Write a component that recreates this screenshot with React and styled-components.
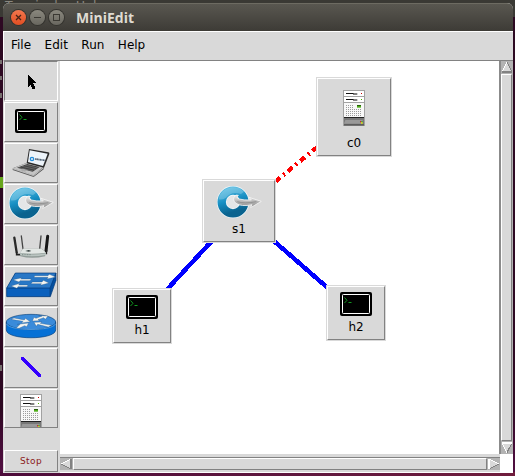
import React from "react";
import styled, { createGlobalStyle, css } from "styled-components";

const GlobalStyle = createGlobalStyle`
  * { box-sizing: border-box; }
  body { margin: 0; overflow: hidden; font-family: "DejaVu Sans", sans-serif; font-size: 12px; color: #000; }
  svg { display: block; flex: none; }
`;

const raised = css`
  border: 1px solid;
  border-color: #fff #828282 #828282 #fff;
`;

const Desktop = styled.div`
  position: relative;
  width: 515px;
  height: 476px;
  padding: 3px 2px 3px 3px;
  overflow: hidden;
  background:
    linear-gradient(#3a3934, #3a3934) 0 0 / 100% 17px no-repeat,
    linear-gradient(90deg, #4d0b3a, #61183f 60%, #701d3d) 0 100% / 100% 4px no-repeat,
    linear-gradient(#2d0922 0 410px, #3c0a2f 430px, #541044);
`;

const TerminalMenu = styled.div`
  position: absolute;
  top: 0;
  left: 5px;
  display: flex;
  gap: 18px;
  font-size: 12.5px;
  line-height: 11px;
  color: #8a8880;
`;

const Speck = styled.div`
  position: absolute;
  left: 0;
  top: ${(p) => p.$top}px;
  width: ${(p) => p.$width || 2}px;
  height: ${(p) => p.$height}px;
  background: ${(p) => p.$color};
`;

const Window = styled.div`
  position: relative;
  width: 510px;
  height: 470px;
  display: flex;
  flex-direction: column;
  border-radius: 6px 6px 0 0;
  overflow: hidden;
  background: #d9d9d9;
`;

const TitleBar = styled.header`
  flex: none;
  height: 28px;
  display: flex;
  align-items: center;
  gap: 4px;
  padding: 0 8px;
  background: linear-gradient(#595750, #3d3b36);
  border-top: 1px solid #6d6b62;
`;

const WindowButton = styled.span`
  width: 15px;
  height: 15px;
  border-radius: 50%;
  box-shadow: 0 0 0 1px #35342f;
  background: ${(p) => (p.$close ? "linear-gradient(#f4774e, #e14e22)" : "linear-gradient(#8a887e, #69675f)")};
`;

const Title = styled.h1`
  margin: 0 0 0 8px;
  font: bold 14px/18px "Open Sans", sans-serif;
  color: #dfdbd2;
`;

const MenuBar = styled.nav`
  flex: none;
  height: 30px;
  display: flex;
  align-items: center;
  gap: 13.5px;
  padding: 0 0 2px 7px;
  border-top: 1px solid #fff;
  border-bottom: 1px solid #828282;
  border-left: 1px solid #fff;
`;

const Body = styled.div`
  flex: 1;
  display: flex;
  min-height: 0;
`;

const Toolbar = styled.aside`
  width: 57px;
  display: flex;
  flex-direction: column;
  gap: 1px;
  padding-left: 1px;
`;

const ToolButton = styled.div`
  width: 54px;
  height: ${(p) => (p.$clipped ? 39 : 40)}px;
  flex: none;
  display: flex;
  justify-content: center;
  align-items: ${(p) => (p.$clipped ? "flex-start" : "center")};
  padding-top: ${(p) => (p.$clipped ? 4 : 0)}px;
  padding-bottom: ${(p) => p.$lift || 0}px;
  overflow: hidden;
  ${raised}
  ${(p) => p.$active && css`border-color: #828282 #fff #fff #828282;`}
`;

const StopButton = styled.div`
  width: 54px;
  height: 22px;
  margin: auto 0 1px;
  display: flex;
  align-items: center;
  justify-content: center;
  font-size: 9px;
  letter-spacing: 0.4px;
  color: #8b1a1a;
  ${raised}
`;

const Workspace = styled.main`
  flex: 1;
  display: grid;
  grid-template: 393px 19px / 439px 14px;
  background: #fff;
`;

const Canvas = styled.section`
  position: relative;
  overflow: hidden;
  background: #fff;
`;

const Links = styled.svg`
  position: absolute;
  inset: 0;
`;

const NodeBox = styled.div`
  position: absolute;
  left: ${(p) => p.$x}px;
  top: ${(p) => p.$y}px;
  width: ${(p) => p.$w}px;
  height: ${(p) => p.$h}px;
  padding: 1px;
  background: #d9d9d9;
`;

const NodeFace = styled.div`
  height: 100%;
  display: flex;
  flex-direction: column;
  align-items: center;
  padding-top: ${(p) => p.$pad}px;
  gap: ${(p) => p.$gap}px;
  line-height: 14px;
  ${raised}
`;

const ScrollV = styled.div`
  display: flex;
  flex-direction: column;
  width: 14px;
  padding: 0 1px 0 0;
  border-left: 2px solid #8b8b8b;
  background: #b3b3b3;
`;

const ScrollH = styled.div`
  display: flex;
  width: 440px;
  height: 18px;
  border: solid #d9d9d9;
  border-width: 3px 0 2px;
  box-shadow: inset 0 1px #828282;
  background: #b3b3b3;
  padding-top: 1px;
`;

const ThumbV = styled.div`
  flex: 1;
  margin: 1px 0;
  background: #d9d9d9;
  ${raised}
`;

const ThumbH = styled.div`
  flex: 1;
  margin: 0 1px;
  background: #d9d9d9;
  ${raised}
`;

function ScrollArrow({ dir }) {
  const angle = { up: 0, right: 90, down: 180, left: 270 }[dir];
  const light = "#fff";
  const dark = "#828282";
  const sides = {
    up: [light, dark, dark],
    right: [light, dark, light],
    down: [dark, light, light],
    left: [dark, light, dark],
  }[dir];
  return (
    <svg width="12" height="12" viewBox="0 0 12 12" shapeRendering="crispEdges">
      <g transform={`rotate(${angle} 6 6)`} strokeWidth="1.3">
        <path d="M6 1 11 11H1Z" fill="#d9d9d9" />
        <path d="M1 11 6 1" stroke={sides[0]} />
        <path d="M6 1 11 11" stroke={sides[1]} />
        <path d="M1 11H11" stroke={sides[2]} />
      </g>
    </svg>
  );
}

function TerminalIcon() {
  return (
    <svg width="32" height="24" viewBox="0 0 32 24">
      <rect width="32" height="24" rx="2" fill="#000" />
      <rect x="2.5" y="2.5" width="27" height="19" rx="0.8" fill="#000" stroke="#fff" />
      <path d="M4.5 5.5 7 8.3 4.5 11M8.5 10.5h3" fill="none" stroke="#129a20" />
    </svg>
  );
}

function ControllerRingIcon() {
  return (
    <svg width="45" height="33" viewBox="27 141 135 99">
      <defs>
        <linearGradient id="ring" x1="0" y1="0" x2="0.3" y2="1">
          <stop offset="0" stopColor="#55b9df" />
          <stop offset="0.5" stopColor="#178fc3" />
          <stop offset="1" stopColor="#0a638f" />
        </linearGradient>
        <linearGradient id="silver" x1="0" y1="0" x2="0" y2="1">
          <stop offset="0" stopColor="#ededed" />
          <stop offset="0.5" stopColor="#b8b8b8" />
          <stop offset="1" stopColor="#8d8d8d" />
        </linearGradient>
      </defs>
      <circle cx="75" cy="189" r="34" fill="#e4e6e7" stroke="#eef5f8" strokeWidth="30" />
      <circle cx="75" cy="189" r="34" fill="none" stroke="url(#ring)" strokeWidth="25" />
      <path d="M32 181Q36 151 70 145Q94 143 108 158L99 165Q70 155 54 176Q43 184 32 181Z" fill="#9dd8ed" opacity="0.4" />
      <path d="M80 171Q72 183 84 193Q100 204 132 197L128 206 160 187 123 175 130 183Q106 184 94 180Q83 177 91 169Q84 167 80 171Z" fill="url(#silver)" stroke="#f5f5f5" strokeWidth="2.5" />
      <path d="M88 188Q108 195 145 188" fill="none" stroke="#828282" strokeWidth="2" />
    </svg>
  );
}

function ServerIcon() {
  const dots = [];
  for (let row = 0; row < 6; row++) {
    for (let col = 0; col < (row < 2 ? 4 : 8); col++) {
      dots.push(<rect key={`${row}-${col}`} x={138 + col * 6} y={105 + row * 6} width="3" height="3" />);
    }
  }
  return (
    <svg width="22" height="36" viewBox="129 60 66 108">
      <rect x="129" y="60" width="66" height="108" fill="#a2a2a2" />
      <rect x="132" y="63" width="60" height="15" fill="#fff" />
      <rect x="132" y="81" width="60" height="15" fill="#fff" />
      <rect x="132" y="99" width="60" height="44" fill="#f8f8f8" />
      <path d="M138 70.5H162M138 88.5H162" stroke="#111" strokeWidth="3" />
      <path d="M159 72H172M159 90H172" stroke="#555" strokeWidth="4" />
      <rect x="183" y="69" width="3" height="3" fill="#c00" />
      <rect x="183" y="87" width="3" height="3" fill="#4eb800" />
      <rect x="171" y="105" width="12" height="8" fill="#4eae18" />
      <rect x="171" y="105" width="12" height="3" fill="#275d0a" />
      <g fill="#9c9c9c">{dots}</g>
      <rect x="132" y="141" width="60" height="3" fill="#222" />
      <path d="M132 144H192V165H132Z" fill="#777" />
      <path d="M136 150H188V161H132Z" fill="#999" />
      <rect x="180" y="153" width="4" height="4" fill="#d22" />
      <rect x="184" y="153" width="4" height="4" fill="#3a3" />
      <rect x="183" y="157" width="5" height="4" fill="#ee0" />
      <path d="M132 165H192" stroke="#444" strokeWidth="3" />
    </svg>
  );
}

function PointerIcon() {
  return (
    <svg width="54" height="40" viewBox="12 3 162 120" shapeRendering="crispEdges">
      <path d="M84 43V81L92 74 97 88H106V82L100 70H110Z" fill="#000" />
    </svg>
  );
}

function LaptopIcon() {
  return (
    <svg width="54" height="40" viewBox="12 9 162 120">
      <path d="M38 85 81 68 132 82 131 88 101 111 38 90Z" fill="#555" />
      <path d="M38 85 81 68 130 81 101 106Z" fill="#c5c5c5" />
      <path d="M51 83 82 72 119 81 98 95Z" fill="#414141" />
      <path d="M56 83 99 93M66 79 106 88M75 75 113 84" stroke="#888" strokeWidth="1.5" />
      <path d="M58 90 69 86 84 91 74 95Z" fill="#aaa" />
      <path d="M38 86 101 107 131 83" fill="none" stroke="#f5f5f5" strokeWidth="2" />
      <path d="M87 27 145 37Q149 38 148 42L132 83 80 70Z" fill="#292929" />
      <path d="M89 31 143 41 129 78 84 66Z" fill="#edf4fa" />
      <circle cx="96" cy="57" r="5" fill="none" stroke="#248edb" strokeWidth="4" />
      <path d="M105 57 135 61" stroke="#536578" strokeWidth="5" strokeDasharray="3 1 5 1" />
    </svg>
  );
}

function AccessPointIcon() {
  return (
    <svg width="54" height="40" viewBox="12 9 162 120">
      <g fill="none" strokeLinecap="round">
        <path d="M43 47 50 91" stroke="#292929" strokeWidth="7" />
        <path d="M64 42 69 81M123 42 119 81" stroke="#454545" strokeWidth="4" />
        <path d="M143 43 138 87" stroke="#171717" strokeWidth="9" />
        <path d="M50 91V98H62M139 84V94H130" stroke="#222" strokeWidth="5" />
      </g>
      <path d="M68 80H126L138 93 135 103Q96 112 61 103L60 93Z" fill="#919c98" />
      <path d="M69 80H125L138 92Q98 98 60 93Z" fill="#e2e7e4" />
      <path d="M60 94Q98 101 138 94V99Q96 106 61 100Z" fill="#bac5c1" />
      <path d="M76 87 86 89 94 87 86 84Z" fill="#303b3a" />
      <path d="M66 98H93" stroke="#65736f" strokeWidth="2" strokeDasharray="3 2" />
    </svg>
  );
}

function SwitchIcon() {
  return (
    <svg width="54" height="40" viewBox="12 132 162 120">
      <path d="M46 153H168V175L151 224H20V198Z" fill="#0450a0" />
      <path d="M46 153H167L150 198H20Z" fill="#2877c6" />
      <path d="M20 199H150V223H20Z" fill="#0a60bd" />
      <path d="M46 153H168V175L151 224H20V198ZM20 198H150L168 153M150 198V223" fill="none" stroke="#063b78" strokeWidth="2" />
      <g fill="#f5f5ef" stroke="#1c4f86" strokeWidth="1">
        <path d="M104 161H144L148 157 167 165 141 171 144 166H102Z" />
        <path d="M97 180H126L130 175 147 183 121 190 124 185H93Z" />
        <path d="M94 171H62L66 167 39 173 57 180 60 176H90Z" />
        <path d="M84 189H56L60 184 33 192 51 199 54 194H81Z" />
      </g>
    </svg>
  );
}

function RouterIcon() {
  return (
    <svg width="54" height="40" viewBox="12 9 162 120">
      <path d="M19 54V78C20 109 166 109 167 78V54Z" fill="#0671d6" stroke="#063f7c" strokeWidth="2" />
      <ellipse cx="93" cy="54" rx="74" ry="23" fill="#3a8bda" stroke="#0b437c" strokeWidth="2" />
      <path d="M20 60C28 82 158 82 166 60" fill="none" stroke="#69b0ee" strokeWidth="2" />
      <g fill="#f5f5ef" stroke="#1c4f86" strokeWidth="1">
        <path d="M33 46 42 42 73 48 76 43 91 53 65 57 69 52Z" />
        <path d="M97 51 102 40 108 43 126 36 116 35 144 36 136 46 131 41 114 47 119 50Z" />
        <path d="M49 72 60 61 52 61 86 57 80 68 74 65 57 73Z" />
        <path d="M102 55 126 54 121 58 155 64 145 69 113 61 109 67Z" />
      </g>
    </svg>
  );
}

function LinkIcon() {
  return (
    <svg width="54" height="40" viewBox="12 132 162 120" shapeRendering="crispEdges">
      <path d="M67 163 119 215" stroke="#3400ff" strokeWidth="9" strokeLinecap="round" />
    </svg>
  );
}

const tools = [
  { name: "select", Icon: PointerIcon, active: true },
  { name: "host", Icon: TerminalIcon, lift: 2 },
  { name: "laptop", Icon: LaptopIcon },
  { name: "controller-switch", Icon: ControllerRingIcon, lift: 1 },
  { name: "access-point", Icon: AccessPointIcon },
  { name: "legacy-switch", Icon: SwitchIcon },
  { name: "legacy-router", Icon: RouterIcon },
  { name: "link", Icon: LinkIcon },
  { name: "controller", Icon: ServerIcon, clipped: true },
];

const nodes = [
  { name: "c0", Icon: ServerIcon, x: 256, y: 16, w: 76, h: 80, pad: 11, gap: 10 },
  { name: "s1", Icon: ControllerRingIcon, x: 142, y: 118, w: 74, h: 64, pad: 5, gap: 3 },
  { name: "h1", Icon: TerminalIcon, x: 52, y: 227, w: 60, h: 56, pad: 5, gap: 4 },
  { name: "h2", Icon: TerminalIcon, x: 266, y: 224, w: 60, h: 56, pad: 5, gap: 4 },
];

export default function App() {
  return (
    <Desktop>
      <GlobalStyle />
      <TerminalMenu><span>Terminal</span><span>Help</span></TerminalMenu>
      <Speck $top={60} $height={4} $color="#77706f" />
      <Speck $top={76} $height={4} $color="#77706f" />
      <Speck $top={93} $height={5} $color="#77706f" />
      <Speck $top={177} $height={11} $width={3} $color="#67a51c" />
      <Speck $top={365} $height={6} $color="#77706f" />
      <Window>
        <TitleBar>
          <WindowButton $close>
            <svg width="15" height="15"><path d="m5 5 5 5m0-5-5 5" stroke="#4a2315" strokeWidth="1.3" /></svg>
          </WindowButton>
          <WindowButton>
            <svg width="15" height="15"><path d="M4 7.5h7" stroke="#3b3933" strokeWidth="1" /></svg>
          </WindowButton>
          <WindowButton>
            <svg width="15" height="15"><rect x="4.5" y="4.5" width="6" height="6" fill="none" stroke="#3b3933" /></svg>
          </WindowButton>
          <Title>MiniEdit</Title>
        </TitleBar>
        <MenuBar>
          <span>File</span><span>Edit</span><span>Run</span><span>Help</span>
        </MenuBar>
        <Body>
          <Toolbar>
            {tools.map(({ name, Icon, active, lift, clipped }) => (
              <ToolButton key={name} $active={active} $lift={lift} $clipped={clipped}><Icon /></ToolButton>
            ))}
            <StopButton>Stop</StopButton>
          </Toolbar>
          <Workspace>
            <Canvas>
              <Links width="439" height="393" shapeRendering="crispEdges">
                <path d="M179.5 150 82.5 255M179.5 150 296.5 252" stroke="#00f" strokeWidth="4.5" />
                <path d="M216 120 294 56" stroke="#f00" strokeWidth="4.4" strokeDasharray="6 4 2 4" strokeDashoffset="0.6" />
              </Links>
              {nodes.map(({ name, Icon, x, y, w, h, pad, gap }) => (
                <NodeBox key={name} $x={x} $y={y} $w={w} $h={h}>
                  <NodeFace $pad={pad} $gap={gap}><Icon /><span>{name}</span></NodeFace>
                </NodeBox>
              ))}
            </Canvas>
            <ScrollV><ScrollArrow dir="up" /><ThumbV /><ScrollArrow dir="down" /></ScrollV>
            <ScrollH><ScrollArrow dir="left" /><ThumbH /><ScrollArrow dir="right" /></ScrollH>
          </Workspace>
        </Body>
      </Window>
    </Desktop>
  );
}
